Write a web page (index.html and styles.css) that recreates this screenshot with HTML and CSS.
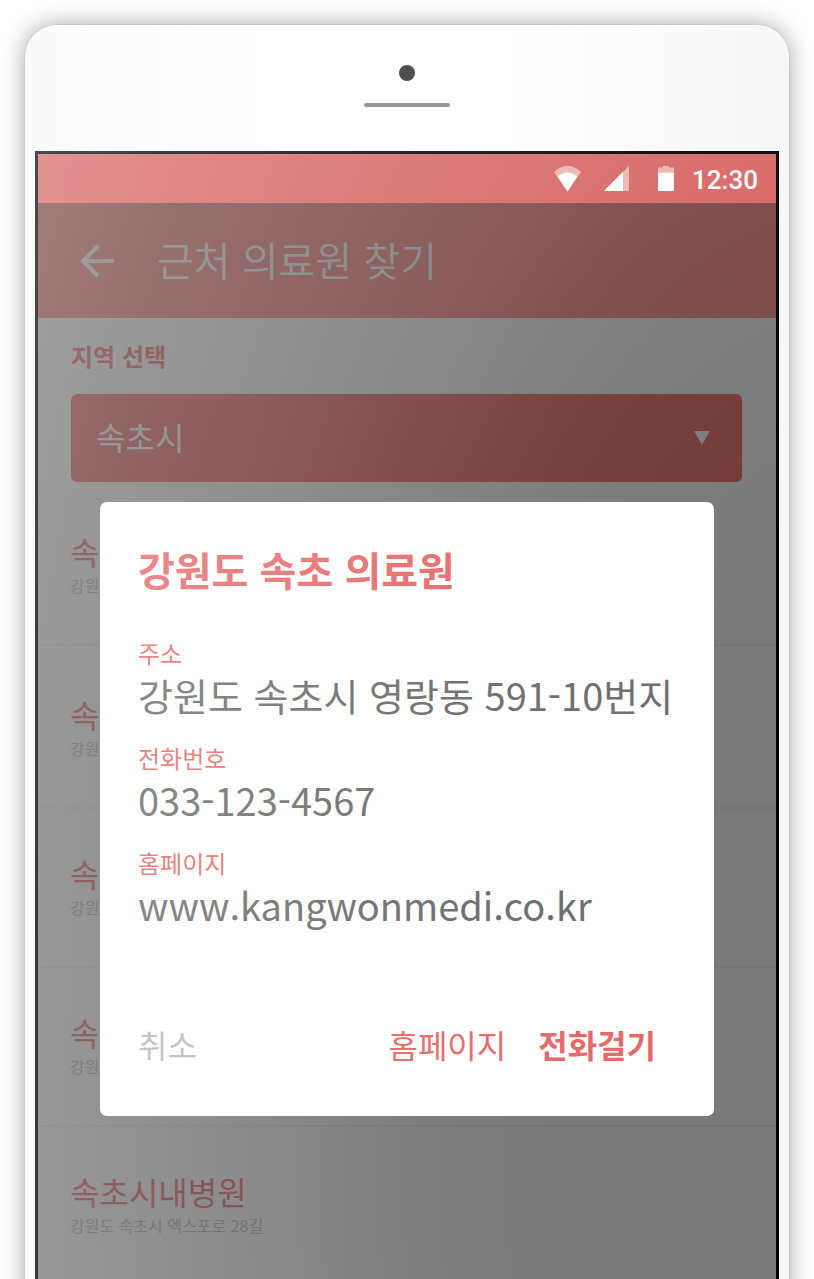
FILE: index.html
```html
<!DOCTYPE html>
<html lang="ko">
<head>
<meta charset="utf-8">
<meta name="viewport" content="width=device-width, initial-scale=1">
<title>근처 의료원 찾기</title>
<link rel="stylesheet" href="styles.css">
</head>
<body>
<div class="phone">
  <div class="bezel">
    <span class="camera"></span>
    <span class="speaker"></span>
  </div>
  <div class="screen">
    <div class="status-bar">
      <svg class="wifi" width="27" height="26" viewBox="0 0 27 26" aria-hidden="true">
        <path d="M0 6Q13.500 -6.500 27 6L13.500 25.500Z" fill="#fff" fill-opacity=".5"/>
        <path d="M3.700 10.500Q13.500 2.500 23.300 10.500L13.500 25.500Z" fill="#fff"/>
      </svg>
      <svg class="signal" width="25" height="25" viewBox="0 0 25 25" aria-hidden="true">
        <path d="M0 25L25 0V25Z" fill="#fff" fill-opacity=".5"/>
        <path d="M0 25L19 6V25Z" fill="#fff"/>
      </svg>
      <svg class="battery" width="16" height="25" viewBox="0 0 16 25" aria-hidden="true">
        <path d="M0 1.500H5V0H11V1.500H16V6.500H0Z" fill="#fff" fill-opacity=".5"/>
        <path d="M0 6.500H16V25H0Z" fill="#fff"/>
      </svg>
      <time class="clock">12:30</time>
    </div>
    <div class="app">
      <header class="app-bar">
        <button class="back" type="button" aria-label="뒤로">
          <svg width="34" height="34" viewBox="0 0 34 34" fill="none" stroke="#fff" stroke-width="4" aria-hidden="true">
            <path d="M18 2L3 17L18 32M3 17H34"/>
          </svg>
        </button>
        <h1 class="app-title">근처 의료원 찾기</h1>
      </header>
      <main>
        <div class="region">
          <label class="region-label" for="region">지역 선택</label>
          <div class="select-box">
            <select class="region-select" id="region">
              <option>속초시</option>
            </select>
            <svg class="select-arrow" width="16" height="14" viewBox="0 0 16 14" aria-hidden="true"><path d="M0 0H16L8 14Z" fill="#fff"/></svg>
          </div>
        </div>
        <ul class="clinics">
          <li class="clinic"><h2 class="clinic-name">속</h2><p class="clinic-address">강원</p></li>
          <li class="clinic clinic-spaced"><h2 class="clinic-name">속</h2><p class="clinic-address">강원</p></li>
          <li class="clinic"><h2 class="clinic-name">속</h2><p class="clinic-address">강원</p></li>
          <li class="clinic"><h2 class="clinic-name">속</h2><p class="clinic-address">강원</p></li>
          <li class="clinic"><h2 class="clinic-name">속초시내병원</h2><p class="clinic-address">강원도 속초시 엑스포로 28길</p></li>
        </ul>
      </main>
      <div class="backdrop"></div>
    </div>
    <div class="dialog-layer">
      <section class="dialog" role="dialog" aria-labelledby="dialog-title">
        <h2 class="dialog-title" id="dialog-title">강원도 속초 의료원</h2>
        <dl class="details">
          <div><dt>주소</dt><dd>강원도 속초시 영랑동 591-10번지</dd></div>
          <div><dt>전화번호</dt><dd>033-123-4567</dd></div>
          <div><dt>홈페이지</dt><dd>www.kangwonmedi.co.kr</dd></div>
        </dl>
        <div class="actions">
          <button class="action action-cancel" type="button">취소</button>
          <button class="action" type="button">홈페이지</button>
          <button class="action action-call" type="button">전화걸기</button>
        </div>
      </section>
    </div>
  </div>
</div>
</body>
</html>
```
FILE: styles.css
```css
* {
  box-sizing: border-box;
}

html,
body {
  height: 100%;
  overflow: hidden;
}

body {
  margin: 0;
  background: #fff;
  font-family: "Noto Sans CJK KR", "Noto Sans", sans-serif;
}

h1, h2, p, ul, dl, dd {
  margin: 0;
  padding: 0;
}

button {
  padding: 0;
  border: 0;
  background: none;
  font-family: inherit;
}

/* Handset */
.phone {
  margin: 25px;
  padding: 0 10px 126px;
  border-radius: 32px;
  background: linear-gradient(to right, #fafafa, #fff 35%, #fff 60%, #f7f7f7);
  box-shadow: 0 0 1px rgba(0, 0, 0, .35), 0 0 24px rgba(0, 0, 0, .36);
}

.bezel {
  display: flex;
  flex-direction: column;
  align-items: center;
  gap: 22px;
  height: 126px;
  padding-top: 40px;
}

.camera {
  width: 16px;
  height: 16px;
  border-radius: 50%;
  background: #505050;
}

.speaker {
  width: 86px;
  height: 4px;
  border-radius: 2px;
  background: #969696;
}

.screen {
  position: relative;
  display: flex;
  flex-direction: column;
  aspect-ratio: 9 / 16;
  border: 3px solid #000;
  background: #fff;
}

/* Light reflection on the glass */
.screen::after {
  content: "";
  position: absolute;
  inset: -3px;
  background: radial-gradient(134% 151% at 110% 75%, rgba(255, 255, 255, 0) 28%, rgba(255, 255, 255, .02) 40%, rgba(255, 255, 255, .06) 50%, rgba(255, 255, 255, .12) 60%, rgba(255, 255, 255, .17) 70%, rgba(255, 255, 255, .22) 82%, rgba(255, 255, 255, .3) 97%);
  pointer-events: none;
}

/* Status bar */
.status-bar {
  display: flex;
  align-items: center;
  justify-content: flex-end;
  height: 49px;
  padding-right: 18px;
  background: #d66664;
}

.wifi {
  margin-right: 23px;
}

.signal {
  margin-right: 29px;
}

.battery {
  margin-right: 18px;
}

.clock {
  padding-top: 2px;
  color: #fff;
  font: 500 26px/30px Roboto, sans-serif;
}

/* App behind the dialog */
.app {
  position: relative;
  flex: 1;
  overflow: hidden;
}

.backdrop {
  position: absolute;
  inset: 0;
  background: rgba(0, 0, 0, .52);
}

.app-bar {
  display: flex;
  align-items: center;
  gap: 43px;
  height: 115px;
  padding: 0 42px;
  background: #ff9491;
}

.back {
  display: flex;
}

.app-title {
  padding-bottom: 4px;
  color: #fff;
  font-size: 40px;
  font-weight: 350;
  line-height: 60px;
}

.region {
  padding: 20px 34px 0 33px;
}

.region-label {
  display: block;
  margin-bottom: 20px;
  color: #f07978;
  font-size: 24px;
  font-weight: 700;
  line-height: 36px;
}

.select-box {
  display: grid;
  align-items: center;
}

.region-select,
.select-arrow {
  grid-area: 1 / 1;
}

.region-select {
  width: 100%;
  height: 88px;
  padding: 0 60px 4px 25px;
  border: 0;
  border-radius: 6px;
  appearance: none;
  background: #f07978;
  color: #fff;
  font-family: inherit;
  font-size: 32px;
  font-weight: 400;
}

.select-arrow {
  justify-self: end;
  margin-right: 32px;
  pointer-events: none;
}

.clinics {
  padding-top: 5px;
  list-style: none;
}

.clinic {
  height: 159px;
  padding: 40px 32px 0;
  border-bottom: 2px solid #f4f4f4;
}

.clinic-spaced {
  height: 163px;
  padding-top: 44px;
}

.clinic-name {
  color: #f07978;
  font-size: 32px;
  font-weight: 400;
  line-height: 48px;
}

.clinic-address {
  color: #c4c4c4;
  font-size: 16px;
  line-height: 20px;
}

/* Dialog */
.dialog-layer {
  position: absolute;
  inset: 0;
  display: flex;
  align-items: center;
  padding: 0 62px 6px;
}

.dialog {
  flex: 1;
  padding: 37px 38px 48px;
  border-radius: 7px;
  background: #fff;
}

.dialog-title {
  margin-bottom: 36px;
  color: #e56b6b;
  font-size: 40px;
  font-weight: 700;
  line-height: 60px;
}

.details {
  display: grid;
  gap: 21px;
}

.details dt {
  color: #e56b6b;
  font-size: 24px;
  font-weight: 400;
  line-height: 36px;
}

.details dd {
  color: #6e6e6e;
  font-size: 38px;
  font-weight: 400;
  line-height: 48px;
  white-space: nowrap;
}

.actions {
  display: flex;
  gap: 32px;
  margin-top: 91px;
  padding-right: 20px;
}

.action {
  color: #e56b6b;
  font-size: 32px;
  font-weight: 400;
  line-height: 48px;
}

.action-cancel {
  margin-right: auto;
  color: #b8b8b8;
}

.action-call {
  font-weight: 700;
}
```
